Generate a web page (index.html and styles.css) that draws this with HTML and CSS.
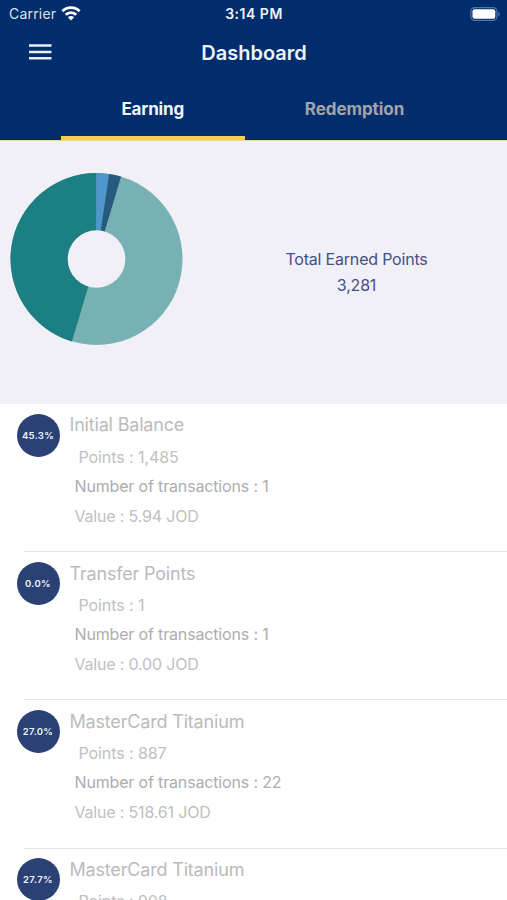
FILE: index.html
```html
<!DOCTYPE html>
<html lang="en">
<head>
<meta charset="utf-8">
<title>Dashboard</title>
<link rel="stylesheet" href="styles.css">
</head>
<body>
<header class="header">
  <div class="status">
    <div class="status-left"><span class="carrier">Carrier</span>
      <svg class="wifi" width="20" height="15" viewBox="0 0 20 15"><g fill="none" stroke="#fff" stroke-width="2.8"><path d="M1.4 5.3a12 12 0 0 1 17.2 0"/><path d="M4.7 8.8a7.5 7.5 0 0 1 10.6 0"/></g><path d="M10 14.4 6.9 11.2a4.4 4.4 0 0 1 6.2 0z" fill="#fff"/></svg>
    </div>
    <span class="time">3:14 PM</span>
    <svg class="battery" width="30" height="14" viewBox="0 0 30 14"><rect x=".9" y=".6" width="26" height="12.8" rx="3.8" fill="none" stroke="#5b76a1" stroke-width="1.1"/><rect x="2.5" y="2.3" width="22.8" height="9.4" rx="2" fill="#fff"/><path d="M28.4 4.6q1.5.8 1.5 2.4t-1.5 2.4z" fill="#5b76a1"/></svg>
  </div>
  <div class="titlebar">
    <svg class="menu" width="23" height="16" viewBox="0 0 23 16"><path d="M0 1.5h22.5M0 8h22.5M0 14.2h22.5" stroke="#e9eef9" stroke-width="2.5"/></svg>
    <h1 class="title">Dashboard</h1>
  </div>
  <nav class="tabs"><a class="tab active"><span>Earning</span></a><a class="tab"><span>Redemption</span></a></nav>
</header>
<section class="summary">
  <svg class="donut" width="173" height="173" viewBox="-86.5 -86 173 173">
    <circle r="86" fill="#78b1b3"/>
    <path d="M0 0-24.57 82.42A86 86 0 0 1 0-86z" fill="#1c7f83"/>
    <path d="M0 0V-86A86 86 0 0 1 12.56-85.08z" fill="#4d96ce"/>
    <path d="M0 0 12.56-85.08A86 86 0 0 1 24.57-82.42z" fill="#285a7e"/>
    <circle r="28.8" fill="#f1f0f6"/>
  </svg>
  <div class="total"><span class="total-label">Total Earned Points</span><span class="total-value">3,281</span></div>
</section>
<main class="list">
  <article class="row"><div class="badge">45.3%</div><div class="info"><h2>Initial Balance</h2><p class="points">Points : 1,485</p><p class="count">Number of transactions : 1</p><p class="value">Value : 5.94 JOD</p></div></article>
  <article class="row"><div class="badge">0.0%</div><div class="info"><h2>Transfer Points</h2><p class="points">Points : 1</p><p class="count">Number of transactions : 1</p><p class="value">Value : 0.00 JOD</p></div></article>
  <article class="row"><div class="badge">27.0%</div><div class="info"><h2>MasterCard Titanium</h2><p class="points">Points : 887</p><p class="count">Number of transactions : 22</p><p class="value">Value : 518.61 JOD</p></div></article>
  <article class="row last"><div class="badge">27.7%</div><div class="info"><h2>MasterCard Titanium</h2><p class="points">Points : 908</p></div></article>
</main>
</body>
</html>
```
FILE: styles.css
```css
* { box-sizing: border-box; }
body { margin: 0; height: 900px; overflow: hidden; background: #fff; font-family: Inter, "Liberation Sans", sans-serif; }
h1, h2, p { margin: 0; font-weight: 400; }
svg { display: block; }
.header { height: 141px; background: #012d6d; color: #fff; border-bottom: 1px solid #e9d9a0; }
.status { height: 28px; display: grid; grid-template-columns: 1fr auto 1fr; align-items: center; padding: 0 7px 0 9px; }
.status-left { display: flex; align-items: center; gap: 5px; margin-top: -2px; }
.carrier { font-size: 14px; line-height: 18px; color: #d9e1ef; letter-spacing: .2px; margin-top: 2px; }
.time { font-size: 14px; font-weight: 600; line-height: 18px; letter-spacing: .5px; color: #edf2fb; margin-left: -1px; }
.battery { justify-self: end; margin-top: -1px; }
.titlebar { height: 48px; display: grid; grid-template-columns: 143px 1fr 171px; align-items: center; padding-left: 29px; }
.title { font-size: 20px; font-weight: 600; line-height: 26px; text-align: center; white-space: nowrap; color: #eef3fc; letter-spacing: -.02px; margin-top: 1px; }
.tabs { height: 64px; display: grid; grid-template-columns: 183.5px 220px; padding-left: 61px; }
.tab { display: flex; align-items: center; justify-content: center; font-size: 17px; font-weight: 700; color: #a1a5ab; padding-top: 1px; letter-spacing: -.05px; }
.tab.active { color: #f2f5fd; border-bottom: 4px solid #f8cd50; padding-top: 5px; letter-spacing: -.15px; }
.summary { height: 263px; background: #f1f0f6; display: flex; padding: 32px 0 0 10px; }
.total { margin-left: 53.5px; width: 240px; padding-top: 74px; display: flex; flex-direction: column; align-items: center; font-size: 16px; line-height: 25.5px; color: #435184; letter-spacing: -.2px; }
.row { position: relative; height: 148.2px; display: flex; padding: 9.5px 0 0 16.5px; }
.row::after { content: ""; position: absolute; left: 24px; right: 0; bottom: 0; height: 1px; background: #e8e8e9; }
.row.last { height: 51.4px; overflow: hidden; }
.row.last::after { display: none; }
.badge { flex: none; width: 43px; height: 43px; border-radius: 50%; background: #2b4175; color: #f0f3fa; display: flex; align-items: center; justify-content: center; font-size: 9.5px; font-weight: 600; letter-spacing: .35px; }
.info { padding-left: 10px; font-size: 16px; line-height: 29.5px; color: #c0c0c2; white-space: nowrap; }
.info h2 { font-size: 18px; line-height: 24px; color: #bbbbbd; letter-spacing: -.18px; margin-top: -.2px; }
.info p { padding-left: 5px; letter-spacing: -.16px; }
.info .points { margin-top: 5.2px; padding-left: 9px; letter-spacing: -.08px; }
.info .count { color: #adadaf; }
.info .value { letter-spacing: -.18px; }
```
